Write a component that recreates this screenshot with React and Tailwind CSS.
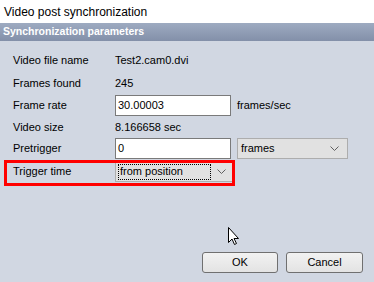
import React from "react";

const Chevron = () => (
  <svg width="9" height="5" viewBox="0 0 9 5" className="block">
    <path d="M0.5 0.5 L4.5 4.5 L8.5 0.5" fill="none" stroke="#606060" strokeWidth="1" />
  </svg>
);

export default function App() {
  const font = { fontFamily: '"Liberation Sans", Arial, sans-serif' };
  return (
    <div className="relative w-[374px] h-[282px] flex flex-col bg-[#d1d7e2] text-[11px] text-black overflow-hidden" style={font}>
      <div className="h-[23px] bg-white flex items-center pl-[4px] text-[12px] text-[#000]">Video post synchronization</div>
      <div className="h-[18px] bg-gradient-to-b from-[#9eabc1] to-[#8390a9] flex items-center pl-[3px] text-white font-bold text-[10.5px]">
        Synchronization parameters
      </div>
      <div className="flex flex-col pt-[8px]">
        <div className="h-[22px] flex items-center">
          <div className="w-[115px] pl-[13px]">Video file name</div>
          <div>Test2.cam0.dvi</div>
        </div>
        <div className="mt-[1px] h-[22px] flex items-center">
          <div className="w-[115px] pl-[13px]">Frames found</div>
          <div>245</div>
        </div>
        <div className="mt-[1px] h-[21px] flex items-center">
          <div className="w-[115px] pl-[13px]">Frame rate</div>
          <div className="w-[116px] h-[21px] bg-white border border-[#7a7a7a] flex items-center pl-[2px]">30.00003</div>
          <div className="pl-[6px]">frames/sec</div>
        </div>
        <div className="mt-[1px] h-[20px] flex items-center">
          <div className="w-[115px] pl-[13px]">Video size</div>
          <div>8.166658 sec</div>
        </div>
        <div className="mt-[1px] h-[21px] flex items-center">
          <div className="w-[115px] pl-[13px]">Pretrigger</div>
          <div className="w-[116px] h-[21px] bg-white border border-[#7a7a7a] flex items-center pl-[2px]">0</div>
          <div className="ml-[6px] w-[111px] h-[21px] bg-[#e1e1e1] border border-[#adadad] flex items-center justify-between pl-[3px] pr-[8px]">
            <span>frames</span>
            <Chevron />
          </div>
        </div>
        <div className="relative mt-[2px] h-[21px] flex items-center">
          <div className="w-[115px] pl-[13px]">Trigger time</div>
          <div className="w-[118px] h-[21px] bg-[#e1e1e1] border border-[#adadad] flex items-center justify-between pl-[2px] pr-[6px]">
            <span className="border border-dotted border-black h-[16px] w-[93px] flex items-center pl-[1px]">from position</span>
            <Chevron />
          </div>
          <div className="absolute left-[4px] top-[-1px] w-[231px] h-[26px] border-[3px] border-[#ff0000] pointer-events-none" />
        </div>
      </div>
      <div className="mt-auto flex justify-end gap-[8px] pr-[11px] pb-[9px]">
        <button className="w-[76px] h-[21px] rounded-[3px] border border-[#707070] bg-gradient-to-b from-[#f2f2f2] to-[#e3e3e3] text-[11px]" style={font}>OK</button>
        <button className="w-[77px] h-[21px] rounded-[3px] border border-[#707070] bg-gradient-to-b from-[#f2f2f2] to-[#e3e3e3] text-[11px]" style={font}>Cancel</button>
      </div>
      <svg className="absolute left-[228px] top-[227px]" width="12" height="19" viewBox="0 0 12 19">
        <path d="M0.5 0.5 L0.5 15.5 L4 12 L6.5 17.5 L8.5 16.5 L6 11.5 L10.5 11.5 Z" fill="white" stroke="black" strokeWidth="1" strokeLinejoin="miter" />
      </svg>
    </div>
  );
}
